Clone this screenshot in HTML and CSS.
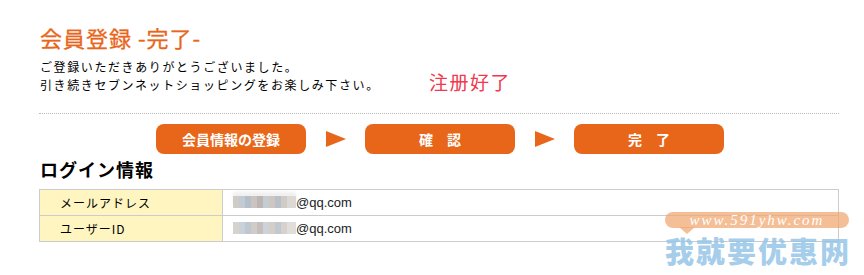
FILE: index.html
```html
<!DOCTYPE html>
<html lang="ja">
<head>
<meta charset="utf-8">
<title>会員登録 -完了-</title>
<link rel="stylesheet" href="styles.css">
</head>
<body>
<div class="page">
  <h1 class="title">会員登録 -完了-</h1>
  <div class="intro">
    <p class="intro-text">ご登録いただきありがとうございました。<br>引き続きセブンネットショッピングをお楽しみ下さい。</p>
    <span class="note">注册好了</span>
  </div>
  <div class="steps">
    <div class="step">会員情報の登録</div>
    <div class="arrow"></div>
    <div class="step">確　認</div>
    <div class="arrow"></div>
    <div class="step">完　了</div>
  </div>
  <h2 class="section">ログイン情報</h2>
  <table class="info">
    <tr>
      <th>メールアドレス</th>
      <td><span class="blur blur-a"></span>@qq.com</td>
    </tr>
    <tr>
      <th>ユーザーID</th>
      <td><span class="blur blur-b"></span>@qq.com</td>
    </tr>
  </table>
</div>
<div class="watermark">
  <div class="wm-pill">www.591yhw.com</div>
  <div class="wm-name">我就要优惠网</div>
</div>
</body>
</html>
```
FILE: styles.css
```css
* { box-sizing: border-box; }
body {
  margin: 0;
  background: #fff;
  font-family: "Noto Sans CJK JP", "DejaVu Sans", sans-serif;
  color: #000;
  position: relative;
  height: 275px;
  overflow: hidden;
}
.page {
  margin-left: 39px;
  width: 800px;
}
.title {
  margin: 0;
  padding: 25px 0 0 1px;
  font-size: 22px;
  line-height: 24px;
  font-weight: normal;
  letter-spacing: 1px;
  color: #e8661a;
  -webkit-text-stroke: 0.3px #e8661a;
}
.intro {
  display: flex;
  align-items: flex-start;
  margin-top: 9px;
  padding-left: 1px;
}
.intro-text {
  margin: 0;
  width: 389px;
  font-size: 12px;
  line-height: 18px;
  letter-spacing: 1.6px;
}
.note {
  margin-top: 12px;
  font-family: "Noto Sans CJK SC", sans-serif;
  font-size: 19px;
  line-height: 24px;
  letter-spacing: 1.5px;
  color: #f0384e;
}
.steps {
  border-top: 1px dotted #bbb;
  margin-top: 19px;
  padding: 10px 0 0 117px;
  display: flex;
  align-items: center;
  gap: 19.5px;
}
.step {
  width: 150px;
  height: 30px;
  border-radius: 8px;
  background: #e8661a;
  color: #fff;
  font-size: 14px;
  font-weight: bold;
  display: flex;
  align-items: center;
  justify-content: center;
}
.arrow {
  width: 0;
  height: 0;
  border-top: 8px solid transparent;
  border-bottom: 8px solid transparent;
  border-left: 20px solid #e8661a;
}
.section {
  margin: 3px 0 0 1px;
  font-size: 18px;
  line-height: 24px;
  font-weight: bold;
  letter-spacing: 1px;
}
.info {
  margin-top: 8px;
  width: 800px;
  border-collapse: collapse;
}
.info th, .info td {
  border: 1px solid #ccc;
  height: 26px;
  padding: 0;
  font-size: 12px;
}
.info th {
  width: 183px;
  background: #fff5c1;
  text-align: left;
  font-weight: normal;
  padding-left: 20px;
  letter-spacing: 1px;
}
.info td {
  padding-left: 10px;
  font-family: "Liberation Sans", Arial, sans-serif;
  font-size: 13px;
  color: #222;
}
.blur {
  display: inline-block;
  width: 63px;
  height: 12px;
  vertical-align: -1px;
  background:
    linear-gradient(90deg, #c9c3bb 0 6px, #b8c2cc 6px 12px, #a9b4c0 12px 18px, #c0bab4 18px 24px, #b2a9a6 24px 30px, #bdc4cc 30px 36px, #c6bdb6 36px 42px, #aeb6c0 42px 48px, #c9c2bc 48px 54px, #d6d2ce 54px 63px);
  opacity: 0.85;
}
.blur-a { box-shadow: 0 -4px 3px #eee; }
.blur-b { opacity: 0.75; }
.watermark {
  position: absolute;
  left: 665px;
  top: 212px;
  width: 184px;
}
.wm-pill {
  position: relative;
  height: 16px;
  border-radius: 8px;
  background: rgba(240, 168, 115, 0.75);
  color: #fff;
  font-family: "Liberation Serif", serif;
  font-style: italic;
  font-size: 15px;
  line-height: 16px;
  letter-spacing: 2px;
  text-align: center;
}
.wm-pill::after {
  content: "";
  position: absolute;
  left: 14px;
  top: 15px;
  border-left: 8px solid transparent;
  border-right: 8px solid transparent;
  border-top: 7px solid rgba(240, 168, 115, 0.75);
}
.wm-name {
  margin-top: 7px;
  font-family: "Noto Sans CJK SC", sans-serif;
  font-weight: 900;
  font-size: 29px;
  line-height: 30px;
  letter-spacing: 2px;
  color: rgba(150, 197, 232, 0.85);
  white-space: nowrap;
}
```
